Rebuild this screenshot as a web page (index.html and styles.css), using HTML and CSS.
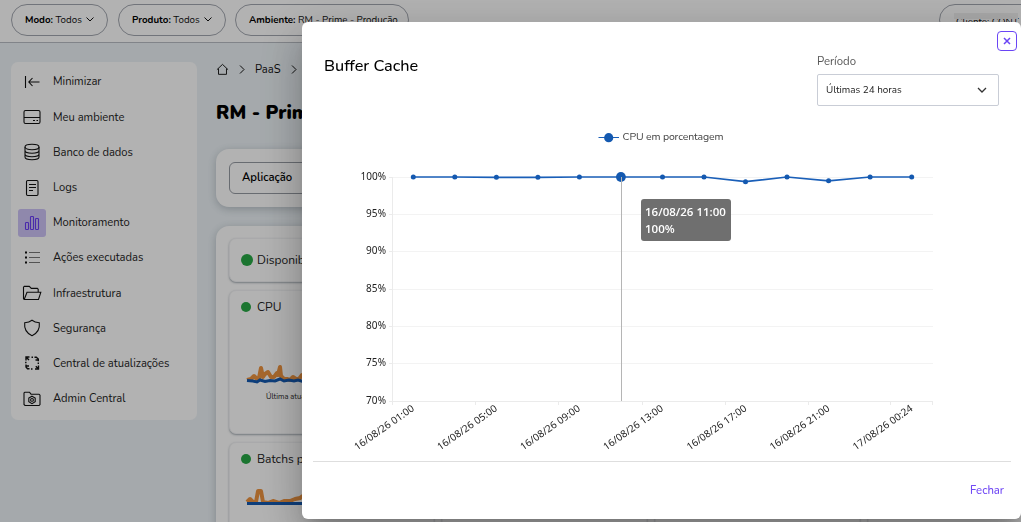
FILE: index.html
```html
<!DOCTYPE html>
<html lang="pt-BR">
<head>
  <meta charset="UTF-8" />
  <meta name="viewport" content="width=device-width, initial-scale=1.0"/>
  <title>Monitoramento</title>
  <link rel="stylesheet" href="styles.css">
</head>
<body>
<header class="topbar">
  <div class="pill pill-modo"><span><b>Modo:</b> Todos</span>
    <svg class="chev" viewBox="0 0 8 5"><path d="M.5 .5 4 4 7.5 .5"/></svg>
  </div>
  <div class="pill pill-produto"><span><b>Produto:</b> Todos</span>
    <svg class="chev" viewBox="0 0 8 5"><path d="M.5 .5 4 4 7.5 .5"/></svg>
  </div>
  <div class="pill pill-ambiente"><span><b>Ambiente:</b> RM - Prime - Produção</span></div>
  <div class="pill pill-user"><span class="mask"></span><span>Cliente: CONT</span></div>
</header>

<div class="page">
  <nav class="sidebar">
    <a class="item"><span class="icon"><svg viewBox="0 0 20 20"><path d="M3.5 4v12M7 10h10.500M10.500 6 6.800 10l3.700 4"/></svg></span>Minimizar</a>
    <a class="item"><span class="icon"><svg viewBox="0 0 20 20"><rect x="2" y="3.500" width="16" height="13" rx="1.500"/><path d="M2 10.500h16M11 13.500h2M14.500 13.500h1.500"/></svg></span>Meu ambiente</a>
    <a class="item"><span class="icon"><svg viewBox="0 0 20 20"><ellipse cx="10" cy="5" rx="7" ry="2.700"/><path d="M3 5v10c0 3.600 14 3.600 14 0V5M3 8.500c0 3.600 14 3.600 14 0M3 12c0 3.600 14 3.600 14 0"/></svg></span>Banco de dados</a>
    <a class="item"><span class="icon"><svg viewBox="0 0 20 20"><rect x="4.500" y="2.500" width="11.500" height="15" rx="1.200"/><path d="M7 6.500h7M7 9.500h7M7 12.500h4"/></svg></span>Logs</a>
    <a class="item active"><span class="icon"><svg viewBox="0 0 20 20"><rect x="3.500" y="9.500" width="3" height="7" rx=".8"/><rect x="8.500" y="3.500" width="3" height="13" rx=".8"/><rect x="13.500" y="5.500" width="3" height="11" rx=".8"/></svg></span>Monitoramento</a>
    <a class="item"><span class="icon"><svg viewBox="0 0 20 20"><g class="soft"><path d="M7 4.500h11M7 9.500h11M7 14.500h11"/></g><path class="dots" d="M3 4.500h2M3 9.500h2M3 14.500h2"/></svg></span>Ações executadas</a>
    <a class="item"><span class="icon"><svg viewBox="0 0 20 20"><path d="M2.200 16.300 1.500 15.500V4.200l.8-.8h5l2 2h6l.9.900V9M2.200 16.500 5 9.300h13.800L16.500 16.500z"/></svg></span>Infraestrutura</a>
    <a class="item"><span class="icon"><svg viewBox="0 0 20 20"><path d="M10 2.300c2 1.600 4.500 2.300 7.300 2.500C18 11 15 15.500 10 17.700 5 15.500 2 11 2.700 4.800 5.500 4.600 8 3.900 10 2.300z"/></svg></span>Segurança</a>
    <a class="item"><span class="icon"><svg viewBox="0 0 20 20"><path class="arrows" d="M4 7.500V4h3.500M4.200 4.200 7 7M9.500 4.300h1.500M12.500 4.300h1.800l2 1.700v2.200M13.500 7h3.500M16.500 12.500v3.500h-3.500M16.300 15.800l-2.500-2.500M10.500 16H9M7.500 15.800H5.500L4 14v-2.500M3.500 13H7M3.800 8.700v1.500M16.300 9.500v1.500"/></svg></span>Central de atualizações</a>
    <a class="item"><span class="icon"><svg viewBox="0 0 20 20"><path d="M2 15.500V4l.8-.8h4.700l1.500 2h8l1 1v9.300l-.9 1H3z"/><path d="m10 7.200 3.200 1.900v3.600L10 14.600l-3.200-1.900V9.100z"/><circle cx="10" cy="10.900" r="1.400"/></svg></span>Admin Central</a>
  </nav>

  <main class="content">
    <div class="breadcrumb">
      <svg class="home" viewBox="0 0 14 14"><path d="M1 7.200 7 1.500l6 5.700M2.700 6v6.200h8.600V6"/></svg>
      <svg class="sep" viewBox="0 0 6 9"><path d="M1 .5 5 4.500 1 8.500"/></svg>
      <span>PaaS</span>
      <svg class="sep" viewBox="0 0 6 9"><path d="M1 .5 5 4.500 1 8.500"/></svg>
    </div>
    <h1>RM - Prime - Produção</h1>
    <section class="panel filters"><button class="tab">Aplicação</button></section>
    <section class="panel cards">
      <div class="card status"><i class="led big"></i>Disponibilidade</div>
      <div class="card status"></div>
      <div class="card status"></div>
      <div class="card status"></div>
      <div class="card metric">
        <div class="card-title"><i class="led"></i>CPU</div>
        <svg class="spark" viewBox="0 0 180 24">
          <path class="orange" d="M0 16l4-1 3-3 3 3 2-1 2-10 2 9 2-3 3-2 3 5 3 0 3-4 1 2 2-8 1 9 3 3 3 0 3 1 3-3 3 2 3 0 3-4 3 4 3-7 3 0"/>
          <path class="blue" d="M0 16.500l6 .5 4 1 3-2 5 1.500 5-1 5 .5 5-2 4 2 5-1 5 1 4-1 5 1.500h5"/>
        </svg>
        <p class="updated">Última atualização: 00:24</p>
      </div>
      <div class="card metric"></div>
      <div class="card metric"></div>
      <div class="card metric"></div>
      <div class="card metric">
        <div class="card-title"><i class="led"></i>Batchs por segundo</div>
        <svg class="spark low" viewBox="0 0 180 24">
          <path class="orange" d="M0 14l3-3 3 3 3 0 2-11 3 0 2 11 5 1 5-2 6 2 5-2 6 0 5-2 5-1 6-4"/>
          <path class="blue" d="M0 15.500h60"/>
        </svg>
      </div>
      <div class="card metric"></div>
      <div class="card metric"></div>
      <div class="card metric"></div>
    </section>
  </main>
</div>

<div class="overlay">
  <div class="modal">
    <button class="close"><svg viewBox="0 0 8 8"><path d="M1 1l6 6M7 1 1 7"/></svg></button>
    <div class="modal-head">
      <h2>Buffer Cache</h2>
      <div class="field">
        <label>Período</label>
        <div class="select"><span>Últimas 24 horas</span>
          <svg viewBox="0 0 10 6"><path d="M1 1l4 4 4-4"/></svg>
        </div>
      </div>
    </div>

    <div class="chart">
      <svg width="698" height="340" viewBox="313 121 698 340">
        <path class="series thin" d="M598.500 137.500h20.500"/>
        <circle class="dot" cx="608.700" cy="137.700" r="4.600"/>
        <text class="legend" x="622.500" y="140.300" textLength="101">CPU em porcentagem</text>

        <path class="grid" d="M392 177.500h541M392 214.500h541M392 251.500h541M392 289.500h541M392 326.500h541M392 363.500h541"/>
        <path class="axis" d="M392.500 177v224M389 177.500h3M389 214.500h3M389 251.500h3M389 289.500h3M389 326.500h3M389 363.500h3M389 401.500h544M392.500 401v4M475.500 401v4M558.500 401v4M642.500 401v4M725.500 401v4M808.500 401v4M890.500 401v4M932.500 401v4"/>
        <g class="ylabels">
          <text x="386" y="179.700" textLength="25.500">100%</text>
          <text x="386" y="217.300" textLength="20">95%</text>
          <text x="386" y="254.300" textLength="20">90%</text>
          <text x="386" y="291.700" textLength="20">85%</text>
          <text x="386" y="329.300" textLength="20">80%</text>
          <text x="386" y="366.300" textLength="20">75%</text>
          <text x="386" y="403.700" textLength="20">70%</text>
        </g>
        <g class="xlabels">
          <text transform="translate(415 410) rotate(-35)" textLength="70.500">16/08/26 01:00</text>
          <text transform="translate(498 410) rotate(-35)" textLength="70.500">16/08/26 05:00</text>
          <text transform="translate(581 410) rotate(-35)" textLength="70.500">16/08/26 09:00</text>
          <text transform="translate(664 410) rotate(-35)" textLength="70.500">16/08/26 13:00</text>
          <text transform="translate(747.500 410) rotate(-35)" textLength="70.500">16/08/26 17:00</text>
          <text transform="translate(830.500 410) rotate(-35)" textLength="70.500">16/08/26 21:00</text>
          <text transform="translate(913.500 410) rotate(-35)" textLength="70.500">17/08/26 00:24</text>
        </g>
        <path class="series" d="M413.300 177 454.800 177 496.400 177.300 537.900 177.300 579.400 177 620.900 177 662.500 177 704 177 745.500 181.700 787 177 828.600 180.800 870.100 177 911.700 177"/>
        <g class="dot">
          <circle cx="413.300" cy="177" r="2.500"/><circle cx="454.800" cy="177" r="2.500"/>
          <circle cx="496.400" cy="177.200" r="2.500"/><circle cx="537.900" cy="177.200" r="2.500"/>
          <circle cx="579.400" cy="177" r="2.500"/><circle cx="620.900" cy="177" r="4.900"/>
          <circle cx="662.500" cy="177" r="2.500"/><circle cx="704" cy="177" r="2.500"/>
          <circle cx="745.500" cy="181.700" r="2.500"/><circle cx="787" cy="177" r="2.500"/>
          <circle cx="828.600" cy="180.800" r="2.500"/><circle cx="870.100" cy="177" r="2.500"/>
          <circle cx="911.700" cy="177" r="2.500"/>
        </g>
        <path class="pointer" d="M621.500 177v224"/>
      </svg>
      <div class="tooltip">16/08/26 11:00<br>100%</div>
    </div>

    <div class="modal-foot"><button class="link">Fechar</button></div>
  </div>
</div>
</body>
</html>
```
FILE: styles.css
```css
* {
  box-sizing: border-box;
}
body {
  margin: 0;
  height: 522px;
  overflow: hidden;
  font-family: Nunito, Lato, sans-serif;
  font-size: 11.2px;
  color: #222;
  background: #edf3f7;
}
button {
  font-family: inherit;
  background: none;
  border: none;
  padding: 0;
}
svg {
  fill: none;
  stroke: #111;
  display: block;
}
.topbar {
  display: flex;
  gap: 10px;
  height: 43px;
  padding: 4px 0 0 11px;
  overflow: hidden;
  background: #fff;
  border-bottom: 1px solid #b9bdc4;
}
.pill {
  display: flex;
  flex: none;
  align-items: center;
  gap: 4px;
  height: 32px;
  padding: 0 0 1px 13px;
  border: 1px solid #a3a7b0;
  border-radius: 16px;
  font-size: 9.75px;
  white-space: nowrap;
  color: #111;
}
.pill b {
  color: #000;
}
.pill-modo {
  width: 97px;
}
.pill-produto {
  width: 108px;
}
.pill-ambiente {
  width: 174px;
  margin-left: -1px;
}
.pill-user {
  position: relative;
  width: 110px;
  margin-left: auto;
  margin-right: -28px;
  padding: 3px 0 0 16px;
}
.mask {
  position: absolute;
  left: 14px;
  top: 8px;
  width: 64px;
  height: 6px;
  background: #f1f1f1;
}
.chev {
  width: 8px;
  height: 5px;
}
.page {
  display: flex;
  align-items: flex-start;
  gap: 19px;
  height: 479px;
  padding: 19px 0 0 11px;
  overflow: hidden;
}
.sidebar {
  flex: none;
  width: 186px;
  height: 358px;
  padding: 2.4px 0 0 7px;
  background: #fff;
  border-radius: 7px;
}
.item {
  display: flex;
  align-items: center;
  gap: 7px;
  height: 35.2px;
}
.icon {
  display: flex;
  align-items: center;
  justify-content: center;
  width: 28px;
  height: 28px;
  border-radius: 3px;
}
.icon svg {
  width: 20px;
  height: 20px;
  stroke-width: 1.1;
}
.active .icon {
  background: #cdc3f7;
}
.active svg {
  stroke: #6a3df5;
}
.icon .soft {
  stroke: #777;
  stroke-width: 1.2;
}
.icon .dots {
  stroke-width: 2;
}
.icon .arrows {
  stroke-width: 1.4;
}
.content {
  flex: none;
  width: 870px;
}
.breadcrumb {
  display: flex;
  align-items: center;
  gap: 10px;
  height: 15px;
  color: #111;
}
.home {
  width: 13px;
  height: 13px;
}
.sep {
  width: 6px;
  height: 9px;
}
h1 {
  margin: 24px 0 0;
  font-size: 19px;
  line-height: 24px;
  font-weight: 900;
  color: #000;
}
.panel {
  background: #fff;
  border-radius: 13px;
  box-shadow: 0 2px 8px rgba(60, 75, 90, .3);
}
.filters {
  height: 58px;
  margin-top: 24px;
  padding: 13px;
}
.tab {
  width: 90px;
  height: 32px;
  padding: 0 0 1px 12px;
  border: 1px solid #969ba3;
  border-radius: 6px;
  font-size: 11.3px;
  font-weight: 600;
  text-align: left;
  color: #000;
}
.cards {
  display: grid;
  grid-template-columns: repeat(4, 205px);
  gap: 8px;
  margin-top: 19px;
  padding: 12px 13px;
}
.card {
  border: 1px solid #f2f3f5;
  border-radius: 7px;
  background: #fff;
  box-shadow: 0 1px 2px rgba(80, 95, 110, .5);
  font-size: 12px;
}
.status {
  display: flex;
  align-items: center;
  gap: 4px;
  height: 44px;
  padding: 0 0 1px 11px;
}
.metric {
  height: 144px;
  padding: 8px 0 0 11px;
}
.card-title {
  display: flex;
  align-items: center;
  gap: 6px;
  height: 16px;
}
.led {
  width: 10px;
  height: 10px;
  border-radius: 50%;
  background: #27a845;
}
.led.big {
  width: 12px;
  height: 12px;
}
.spark {
  width: 180px;
  height: 24px;
  margin: 49px 0 0 6px;
  overflow: visible;
}
.spark.low {
  margin-top: 21px;
}
.orange {
  stroke: #ee9440;
  stroke-width: 4;
  stroke-linejoin: round;
}
.blue {
  stroke: #1459b0;
  stroke-width: 3;
}
.updated {
  margin: 3px 0 0 25px;
  font-size: 7.5px;
}
.overlay {
  position: fixed;
  inset: 0;
  padding: 22px 0 0 302px;
  overflow: hidden;
  background: rgba(0, 0, 0, .3);
}
.modal {
  position: relative;
  width: 719px;
  height: 497px;
  padding: 32px 10px 0 11px;
  background: #fff;
  border-radius: 6px;
  box-shadow: 0 11px 15px -7px rgba(0, 0, 0, .2), 0 24px 38px 3px rgba(0, 0, 0, .14), 0 9px 46px 8px rgba(0, 0, 0, .12);
}
.close {
  position: absolute;
  top: 9px;
  right: 4px;
  display: flex;
  align-items: center;
  justify-content: center;
  width: 20px;
  height: 20px;
  border: 1px solid #6a45f5;
  border-radius: 4px;
}
.close svg {
  width: 8px;
  height: 8px;
  margin-top: -1px;
  stroke: #6a45f5;
  stroke-width: 1.5;
}
.modal-head {
  display: flex;
  justify-content: space-between;
  height: 67px;
  padding: 0 12px 0 11px;
}
h2 {
  margin: 0;
  font-size: 16.2px;
  line-height: 24px;
  font-weight: 500;
  color: #000;
}
.field label {
  display: block;
  height: 20px;
  line-height: 14px;
  font-size: 11.4px;
  color: #555;
}
.select {
  display: flex;
  align-items: center;
  justify-content: space-between;
  width: 182px;
  height: 32px;
  padding: 0 11px 1px 8px;
  border: 1px solid #c9cdd6;
  border-radius: 2px;
  font-size: 9.9px;
}
.select svg {
  width: 10px;
  height: 6px;
  stroke: #333;
  stroke-width: 1.3;
}
.chart {
  position: relative;
  height: 340px;
}
.chart text {
  stroke: none;
  fill: #222;
  font-family: "Noto Sans", sans-serif;
  font-size: 10px;
}
.chart .legend {
  fill: #444;
  font-family: Nunito, Lato, sans-serif;
  font-size: 10.5px;
}
.ylabels text, .xlabels text {
  text-anchor: end;
}
.grid {
  stroke: #f3f3f3;
}
.axis {
  stroke: #ebebeb;
}
.series {
  stroke: #1a5fb8;
  stroke-width: 1.7;
}
.series.thin {
  stroke-width: 1;
}
.dot {
  fill: #1459b0;
  stroke: none;
}
.pointer {
  stroke: #b5b5b5;
}
.tooltip {
  position: absolute;
  left: 328px;
  top: 78px;
  width: 90px;
  height: 42px;
  padding: 4px 4px;
  border-radius: 3px;
  background: rgba(90, 90, 90, .87);
  color: #fff;
  font: 600 11.500px/17px "Open Sans", sans-serif;
  white-space: nowrap;
}
.modal-foot {
  display: flex;
  justify-content: flex-end;
  height: 58px;
  padding-right: 7px;
  border-top: 1px solid #dedede;
}
.link {
  color: #7048f5;
  font-size: 11.3px;
  font-weight: 500;
}
```
